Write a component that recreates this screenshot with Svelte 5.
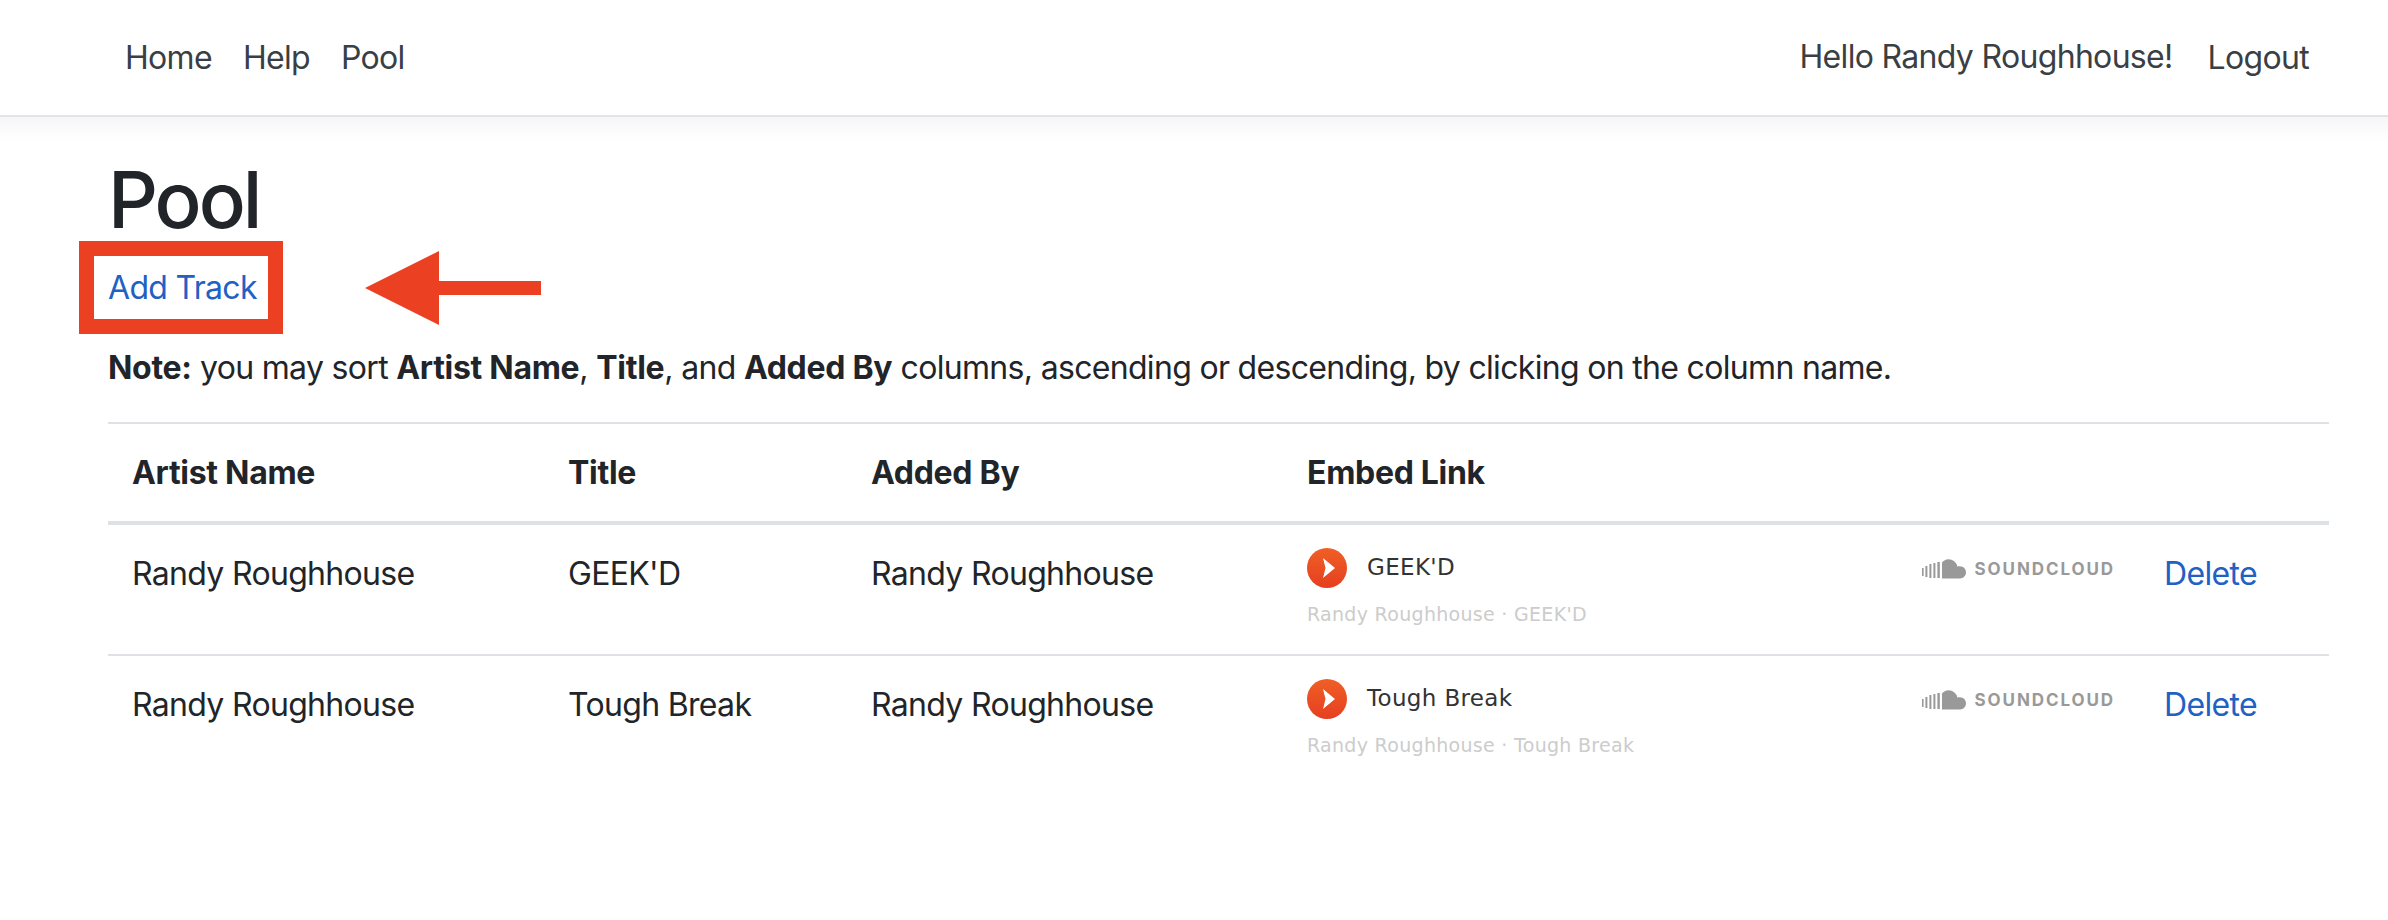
<script>
  const tracks = [
    { artist: 'Randy Roughhouse', title: "GEEK'D" },
    { artist: 'Randy Roughhouse', title: 'Tough Break' }
  ];
</script>

<header class="nav">
  <nav class="links">
    <a href="#home">Home</a>
    <a href="#help">Help</a>
    <a href="#pool">Pool</a>
  </nav>
  <div class="user">
    <span class="hello">Hello Randy Roughhouse!</span>
    <a href="#logout">Logout</a>
  </div>
</header>

<main>
  <h1>Pool</h1>
  <div class="add">
    <a href="#add">Add Track</a>
    <span class="box"></span>
    <svg class="arrow" width="178" height="76" viewBox="0 0 178 76" aria-hidden="true">
      <path d="M0 38 L74 1 V31 H176 V45 H74 V75 Z" fill="#ec4023" />
    </svg>
  </div>
  <p class="note"><b>Note:</b> you may sort <b>Artist Name</b>, <b>Title</b>, and <b>Added By</b> columns, ascending or descending, by clicking on the column name.</p>

  <table>
    <colgroup>
      <col class="c1" /><col class="c2" /><col class="c3" /><col class="c4" /><col class="c5" />
    </colgroup>
    <thead>
      <tr><th>Artist Name</th><th>Title</th><th>Added By</th><th>Embed Link</th><th></th></tr>
    </thead>
    <tbody>
      {#each tracks as t}
        <tr>
          <td>{t.artist}</td>
          <td>{t.title}</td>
          <td>{t.artist}</td>
          <td class="embed">
            <div class="player">
              <div class="top">
                <svg class="play" width="40" height="40" viewBox="0 0 40 40" aria-hidden="true">
                  <defs>
                    <linearGradient id="pg" x1="0" y1="0" x2="0" y2="1">
                      <stop offset="0" stop-color="#ef5f26" />
                      <stop offset="1" stop-color="#e63f20" />
                    </linearGradient>
                  </defs>
                  <circle cx="20" cy="20" r="20" fill="url(#pg)" />
                  <path d="M16 10 L28 20 L16 30 L18.5 20 Z" fill="#fff" />
                </svg>
                <span class="tname">{t.title}</span>
                <span class="sc">
                  <svg width="44" height="20" viewBox="0 0 44 20" aria-hidden="true">
                    <g fill="#999">
                      <rect x="0" y="9" width="1.6" height="8" />
                      <rect x="3.4" y="7" width="2" height="11" />
                      <rect x="7.4" y="5" width="2" height="14" />
                      <rect x="11.4" y="4" width="2" height="15" />
                      <rect x="15.4" y="3" width="2.4" height="16" />
                      <path d="M20 3.6 C22 0.6 26 -0.6 29.5 0.8 C33 2.2 35 5 35.4 7.6 C36.2 7.2 37 7.2 38 7.2 C41.4 7.2 44 10 44 13.2 C44 16.6 41.4 19.4 38 19.4 L20 19.4 Z" />
                    </g>
                  </svg>
                  <span class="sctext">SOUNDCLOUD</span>
                </span>
              </div>
              <div class="sub">{t.artist} · {t.title}</div>
            </div>
          </td>
          <td class="del"><a href="#delete">Delete</a></td>
        </tr>
      {/each}
    </tbody>
  </table>
</main>

<style>
  :global(body) {
    margin: 0;
    background: #fff;
    color: #212529;
    font-family: Inter, "Liberation Sans", sans-serif;
    font-size: 32px;
    line-height: 48px;
    letter-spacing: -0.68px;
  }
  b {
    letter-spacing: -0.3px;
  }
  a {
    color: #2161c4;
    text-decoration: none;
  }
  .nav {
    box-sizing: border-box;
    border-bottom: 2px solid #e3e3ea;
    height: 117px;
    display: flex;
    justify-content: space-between;
    align-items: center;
    padding: 0 79px 0 125px;
  }
  .nav a,
  .hello {
    color: #3a3f45;
  }
  .links {
    display: flex;
    gap: 31px;
  }
  .user {
    display: flex;
    gap: 35px;
  }
  .hello {
    position: relative;
    top: -1px;
  }
  main {
    padding: 37px 59px 0 108px;
    background: linear-gradient(#f6f6f7, #fff 24px) no-repeat;
  }
  h1 {
    margin: 0;
    font-size: 78px;
    line-height: 92px;
    font-weight: 500;
    letter-spacing: -3px;
  }
  .add {
    position: relative;
    height: 48px;
    margin-top: 18px;
  }
  .box {
    position: absolute;
    left: -29px;
    top: -23px;
    width: 204px;
    height: 93px;
    box-sizing: border-box;
    border: 15px solid #ec4023;
  }
  .arrow {
    position: absolute;
    left: 257px;
    top: -14px;
  }
  .note {
    margin: 32px 0 0;
  }
  table {
    width: 100%;
    table-layout: fixed;
    border-collapse: collapse;
    margin-top: 30px;
  }
  .c1 { width: 436px; }
  .c2 { width: 303px; }
  .c3 { width: 436px; }
  .c5 { width: 189px; }
  th {
    text-align: left;
    font-weight: 700;
    letter-spacing: -0.3px;
    padding: 24px;
    height: 100px;
    box-sizing: border-box;
    border-top: 2px solid #dee2e6;
    border-bottom: 4px solid #dee2e6;
  }
  td {
    padding: 25px 24px 0;
    vertical-align: top;
    border-top: 2px solid #dee2e6;
    height: 132px;
    box-sizing: border-box;
  }
  tbody tr:first-child td {
    border-top: none;
  }
  td.embed {
    padding: 23px 24px 0;
  }
  .top {
    display: flex;
    align-items: center;
    height: 40px;
  }
  .tname {
    margin-left: 20px;
    font-family: "DejaVu Sans", sans-serif;
    font-size: 23px;
    line-height: 28px;
    color: #333;
    letter-spacing: 0.35px;
    position: relative;
    top: -1px;
  }
  .sub {
    margin-top: 14px;
    font-family: "DejaVu Sans", sans-serif;
    font-size: 19px;
    line-height: 24px;
    color: #ccc;
    letter-spacing: 0.3px;
  }
  .sc {
    margin-left: auto;
    margin-right: 1px;
    display: flex;
    align-items: center;
    gap: 9px;
    position: relative;
    top: 1px;
  }
  .sctext {
    font-family: Inter, "Liberation Sans", sans-serif;
    font-size: 17px;
    line-height: 20px;
    font-weight: 700;
    letter-spacing: 1.9px;
    color: #999;
  }
</style>
